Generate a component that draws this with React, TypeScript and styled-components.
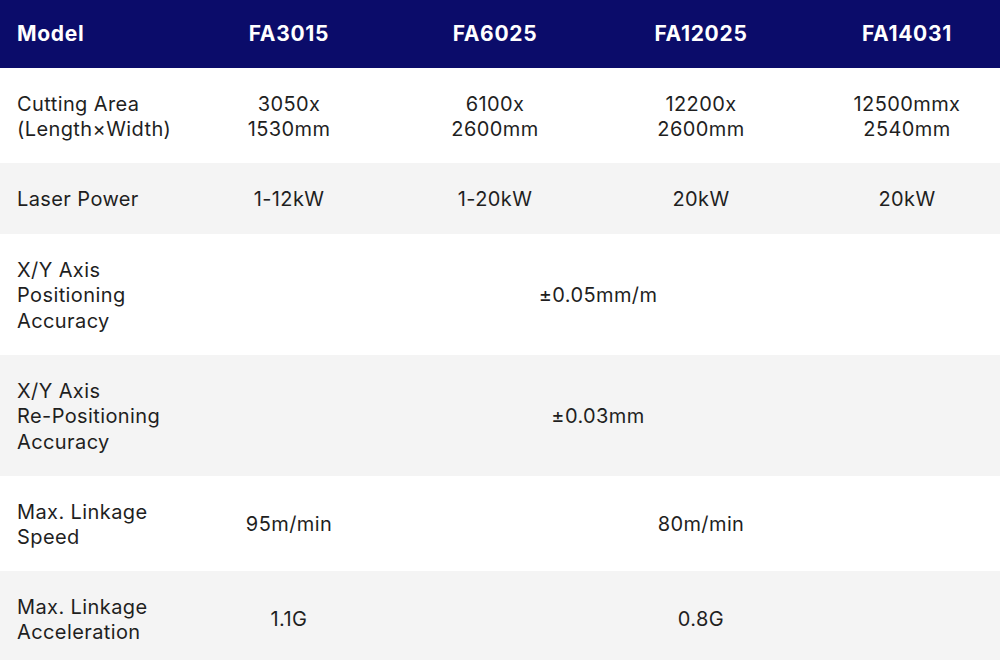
import React from 'react';
import styled, { createGlobalStyle } from 'styled-components';

const GlobalStyle = createGlobalStyle`
  html, body {
    margin: 0;
    padding: 0;
    background: #ffffff;
    overflow: hidden;
  }
  body {
    font-family: Inter, "Noto Sans", "Liberation Sans", sans-serif;
  }
`;

const Page = styled.div`
  width: 1000px;
  height: 660px;
  overflow: hidden;
`;

const SpecTable = styled.table`
  width: 1010px;
  border-collapse: collapse;
  table-layout: fixed;
`;

const Col = styled.col<{ $width: number }>`
  width: ${(p) => p.$width}px;
`;

const HeadRow = styled.tr`
  background-color: #0b0c6a;
  height: 68px;
`;

const HeadCell = styled.th<{ $first?: boolean }>`
  color: #ffffff;
  font-size: 21px;
  font-weight: 700;
  letter-spacing: 0.7px;
  text-align: ${(p) => (p.$first ? 'left' : 'center')};
  padding: 0 0 2px ${(p) => (p.$first ? '17px' : '0')};
`;

const BodyRow = styled.tr<{ $shade?: boolean; $height: number }>`
  background-color: ${(p) => (p.$shade ? '#f4f4f4' : '#ffffff')};
  height: ${(p) => p.$height}px;
`;

const LabelCell = styled.td`
  color: #1f1f1f;
  font-size: 20px;
  line-height: 25.5px;
  letter-spacing: 0.4px;
  text-align: left;
  padding: 3px 0 0 17px;
`;

const ValueCell = styled.td`
  color: #1f1f1f;
  font-size: 20px;
  line-height: 25.5px;
  letter-spacing: 0.4px;
  text-align: center;
  padding: 3px 0 0 0;
`;

const models = ['FA3015', 'FA6025', 'FA12025', 'FA14031'];
const colWidths = [186, 206, 206, 206, 206];

type Row = {
  label: string[];
  height: number;
  cells: { text: string[]; span?: number }[];
};

const rows: Row[] = [
  {
    label: ['Cutting Area', '(Length×Width)'],
    height: 95,
    cells: [
      { text: ['3050x', '1530mm'] },
      { text: ['6100x', '2600mm'] },
      { text: ['12200x', '2600mm'] },
      { text: ['12500mmx', '2540mm'] },
    ],
  },
  {
    label: ['Laser Power'],
    height: 71,
    cells: [
      { text: ['1-12kW'] },
      { text: ['1-20kW'] },
      { text: ['20kW'] },
      { text: ['20kW'] },
    ],
  },
  {
    label: ['X/Y Axis', 'Positioning', 'Accuracy'],
    height: 121,
    cells: [{ text: ['±0.05mm/m'], span: 4 }],
  },
  {
    label: ['X/Y Axis', 'Re-Positioning', 'Accuracy'],
    height: 121,
    cells: [{ text: ['±0.03mm'], span: 4 }],
  },
  {
    label: ['Max. Linkage', 'Speed'],
    height: 95,
    cells: [{ text: ['95m/min'] }, { text: ['80m/min'], span: 3 }],
  },
  {
    label: ['Max. Linkage', 'Acceleration'],
    height: 95,
    cells: [{ text: ['1.1G'] }, { text: ['0.8G'], span: 3 }],
  },
];

function Lines({ text }: { text: string[] }) {
  return (
    <>
      {text.map((t, i) => (
        <React.Fragment key={i}>
          {i > 0 && <br />}
          {t}
        </React.Fragment>
      ))}
    </>
  );
}

export default function App() {
  return (
    <Page>
      <GlobalStyle />
      <SpecTable>
        <colgroup>
          {colWidths.map((w, i) => (
            <Col key={i} $width={w} />
          ))}
        </colgroup>
        <thead>
          <HeadRow>
            <HeadCell $first>Model</HeadCell>
            {models.map((m) => (
              <HeadCell key={m}>{m}</HeadCell>
            ))}
          </HeadRow>
        </thead>
        <tbody>
          {rows.map((row, i) => (
            <BodyRow key={i} $shade={i % 2 === 1} $height={row.height}>
              <LabelCell>
                <Lines text={row.label} />
              </LabelCell>
              {row.cells.map((c, j) => (
                <ValueCell key={j} colSpan={c.span ?? 1}>
                  <Lines text={c.text} />
                </ValueCell>
              ))}
            </BodyRow>
          ))}
        </tbody>
      </SpecTable>
    </Page>
  );
}
